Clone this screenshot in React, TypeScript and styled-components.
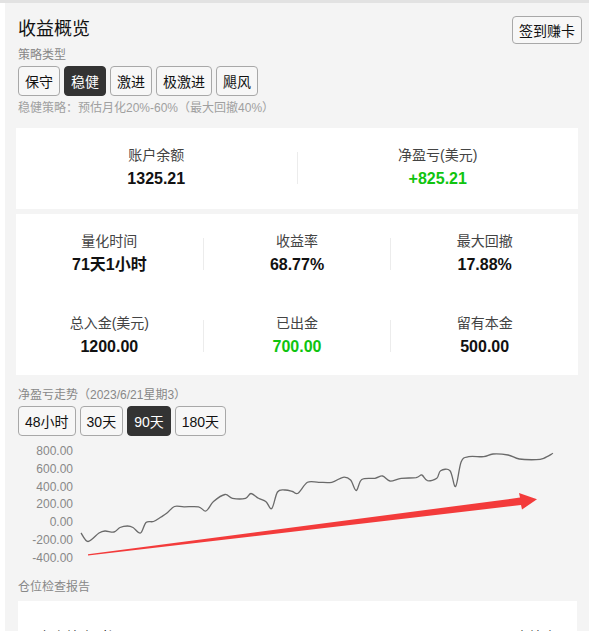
import React from "react";
import styled, { createGlobalStyle } from "styled-components";

const GlobalStyle = createGlobalStyle`
  html, body {
    margin: 0;
    padding: 0;
    background: #fff;
    font-family: "Liberation Sans", Arial, "Noto Sans CJK SC", sans-serif;
    color: #222;
  }
`;

const Page = styled.div`
  border-top: 3px solid #e2e2e2;
  padding-left: 5px;
  background: #fff;
  height: 628px;
  overflow: hidden;
`;

const Panel = styled.div`
  background: #f4f4f4;
  padding: 13px 7px 0 13px;
  height: 100%;
  box-sizing: border-box;
`;

const Header = styled.div`
  display: flex;
  justify-content: space-between;
  align-items: flex-start;
`;

const Title = styled.h1`
  margin: 0;
  padding-top: 1px;
  font-size: 18px;
  line-height: 24px;
  font-weight: normal;
  color: #111;
`;

const Btn = styled.button<{ $active?: boolean }>`
  height: ${(p) => (p.$active !== undefined ? "30px" : "28px")};
  padding: 0 6px;
  font-family: inherit;
  font-size: 14px;
  border-radius: 4px;
  border: 1px solid ${(p) => (p.$active ? "#333" : "#a8a8a8")};
  background: ${(p) => (p.$active ? "#333" : "#f7f7f7")};
  color: ${(p) => (p.$active ? "#fff" : "#111")};
  cursor: pointer;
`;

const Caption = styled.div<{ $top?: number }>`
  margin-top: ${(p) => p.$top ?? 0}px;
  font-size: 12px;
  line-height: 18px;
  color: #888;
`;

const BtnRow = styled.div<{ $top: number }>`
  display: flex;
  gap: 4px;
  margin-top: ${(p) => p.$top}px;
`;

const Hint = styled.div`
  margin-top: 3px;
  font-size: 12px;
  line-height: 18px;
  color: #a0a0a0;
`;

const Card = styled.div<{ $top: number }>`
  background: #fff;
  margin: ${(p) => p.$top}px 4px 0 -2px;
`;

const StatRow = styled.div<{ $pad: string }>`
  display: flex;
  align-items: center;
  padding: ${(p) => p.$pad};
`;

const Stat = styled.div`
  flex: 1;
  text-align: center;
`;

const Divider = styled.div`
  width: 1px;
  height: 32px;
  background: #ececec;
`;

const Label = styled.div`
  font-size: 14px;
  line-height: 20px;
  color: #444;
`;

const Value = styled.div<{ $green?: boolean }>`
  margin-top: 3px;
  font-size: 16px;
  line-height: 22px;
  font-weight: bold;
  color: ${(p) => (p.$green ? "#0fc40f" : "#111")};
`;

const ChartBox = styled.div`
  margin: 4px 0 0 0;
  height: 135px;
`;

const ReportCard = styled.div`
  background: #fff;
  margin: 5px 5px 0 0;
  padding: 25px 20px 0 20px;
  display: flex;
  justify-content: space-between;
  font-size: 14px;
  line-height: 22px;
  color: #222;
`;

const StatItem = ({ label, value, green }: { label: string; value: string; green?: boolean }) => (
  <Stat>
    <Label>{label}</Label>
    <Value $green={green}>{value}</Value>
  </Stat>
);

// net profit points (page coords), smoothed at run time
const pts: [number, number][] = [
  [81, 533], [88, 541.5], [99, 533], [105, 531], [114, 532], [120, 527.5], [127.5, 526],
  [133, 527.5], [140.5, 533], [146, 522.5], [153.5, 521.5], [161, 517], [167, 513],
  [174.5, 506.5], [184, 506.8], [198.5, 506.8], [206, 511], [213.5, 501.5], [225, 494.5],
  [232.5, 498.3], [245.5, 498.3], [251, 493.5], [258.5, 498.3], [266, 501.7], [271.8, 508.5],
  [277.5, 492], [285, 490], [292.5, 491.5], [298, 493.3], [307.5, 482.3], [318.7, 482.3],
  [331.8, 482.3], [343, 477.3], [350.6, 480], [356.2, 490.5], [361.8, 479.5], [375, 478.3],
  [382.5, 476], [390, 481], [401.2, 478.3], [416.2, 477.7], [421.8, 475], [427.5, 480.7],
  [436.8, 478.3], [440.6, 470.7], [450, 470.7], [455.6, 486.5], [461.2, 461.7], [468.7, 456.7],
  [483.7, 456.7], [493, 454], [508, 455], [519.3, 459], [536.2, 459.7], [543.7, 458.3], [553, 453.3],
];

const smooth = (p: [number, number][]) => {
  const q = p.map(([x, y]) => [x - 18, y - 440]);
  let d = `M${q[0][0]},${q[0][1]}`;
  for (let i = 0; i < q.length - 1; i++) {
    const p0 = q[Math.max(0, i - 1)];
    const p1 = q[i];
    const p2 = q[i + 1];
    const p3 = q[Math.min(q.length - 1, i + 2)];
    const c1 = [p1[0] + (p2[0] - p0[0]) / 6, p1[1] + (p2[1] - p0[1]) / 6];
    const c2 = [p2[0] - (p3[0] - p1[0]) / 6, p2[1] - (p3[1] - p1[1]) / 6];
    d += ` C${c1[0].toFixed(1)},${c1[1].toFixed(1)} ${c2[0].toFixed(1)},${c2[1].toFixed(1)} ${p2[0]},${p2[1]}`;
  }
  return d;
};

const ticks = ["800.00", "600.00", "400.00", "200.00", "0.00", "-200.00", "-400.00"];

const Chart = () => (
  <ChartBox>
    <svg width="560" height="135" viewBox="0 0 560 135">
      {ticks.map((t, i) => (
        <text
          key={t}
          x={55}
          y={11 + i * 17.7 + 4.3}
          textAnchor="end"
          fontSize="12"
          fill="#888"
          fontFamily='"Liberation Sans", Arial, sans-serif'
        >
          {t}
        </text>
      ))}
      <path d={smooth(pts)} fill="none" stroke="#6a6a6a" strokeWidth="1.3" />
      <polygon
        points="70,114.3 502,57.6 501,53 519,59.2 504,69.6 503,65 70,115.6"
        fill="#f33b3b"
      />
    </svg>
  </ChartBox>
);

export default function App() {
  return (
    <Page>
      <GlobalStyle />
      <Panel>
        <Header>
          <Title>收益概览</Title>
          <Btn>签到赚卡</Btn>
        </Header>
        <Caption $top={2}>策略类型</Caption>
        <BtnRow $top={2}>
          <Btn $active={false}>保守</Btn>
          <Btn $active>稳健</Btn>
          <Btn $active={false}>激进</Btn>
          <Btn $active={false}>极激进</Btn>
          <Btn $active={false}>飓风</Btn>
        </BtnRow>
        <Hint>稳健策略：预估月化20%-60%（最大回撤40%）</Hint>

        <Card $top={11}>
          <StatRow $pad="17px 0 19px">
            <StatItem label="账户余额" value="1325.21" />
            <Divider />
            <StatItem label="净盈亏(美元)" value="+825.21" green />
          </StatRow>
        </Card>

        <Card $top={5}>
          <StatRow $pad="17px 0 0">
            <StatItem label="量化时间" value="71天1小时" />
            <Divider />
            <StatItem label="收益率" value="68.77%" />
            <Divider />
            <StatItem label="最大回撤" value="17.88%" />
          </StatRow>
          <StatRow $pad="37px 0 17px">
            <StatItem label="总入金(美元)" value="1200.00" />
            <Divider />
            <StatItem label="已出金" value="700.00" green />
            <Divider />
            <StatItem label="留有本金" value="500.00" />
          </StatRow>
        </Card>

        <Caption $top={11}>净盈亏走势（2023/6/21星期3）</Caption>
        <BtnRow $top={2}>
          <Btn $active={false}>48小时</Btn>
          <Btn $active={false}>30天</Btn>
          <Btn $active>90天</Btn>
          <Btn $active={false}>180天</Btn>
        </BtnRow>
        <Chart />

        <Caption $top={3}>仓位检查报告</Caption>
        <ReportCard>
          <span>上次检查时间</span>
          <span>未检查</span>
        </ReportCard>
      </Panel>
    </Page>
  );
}
